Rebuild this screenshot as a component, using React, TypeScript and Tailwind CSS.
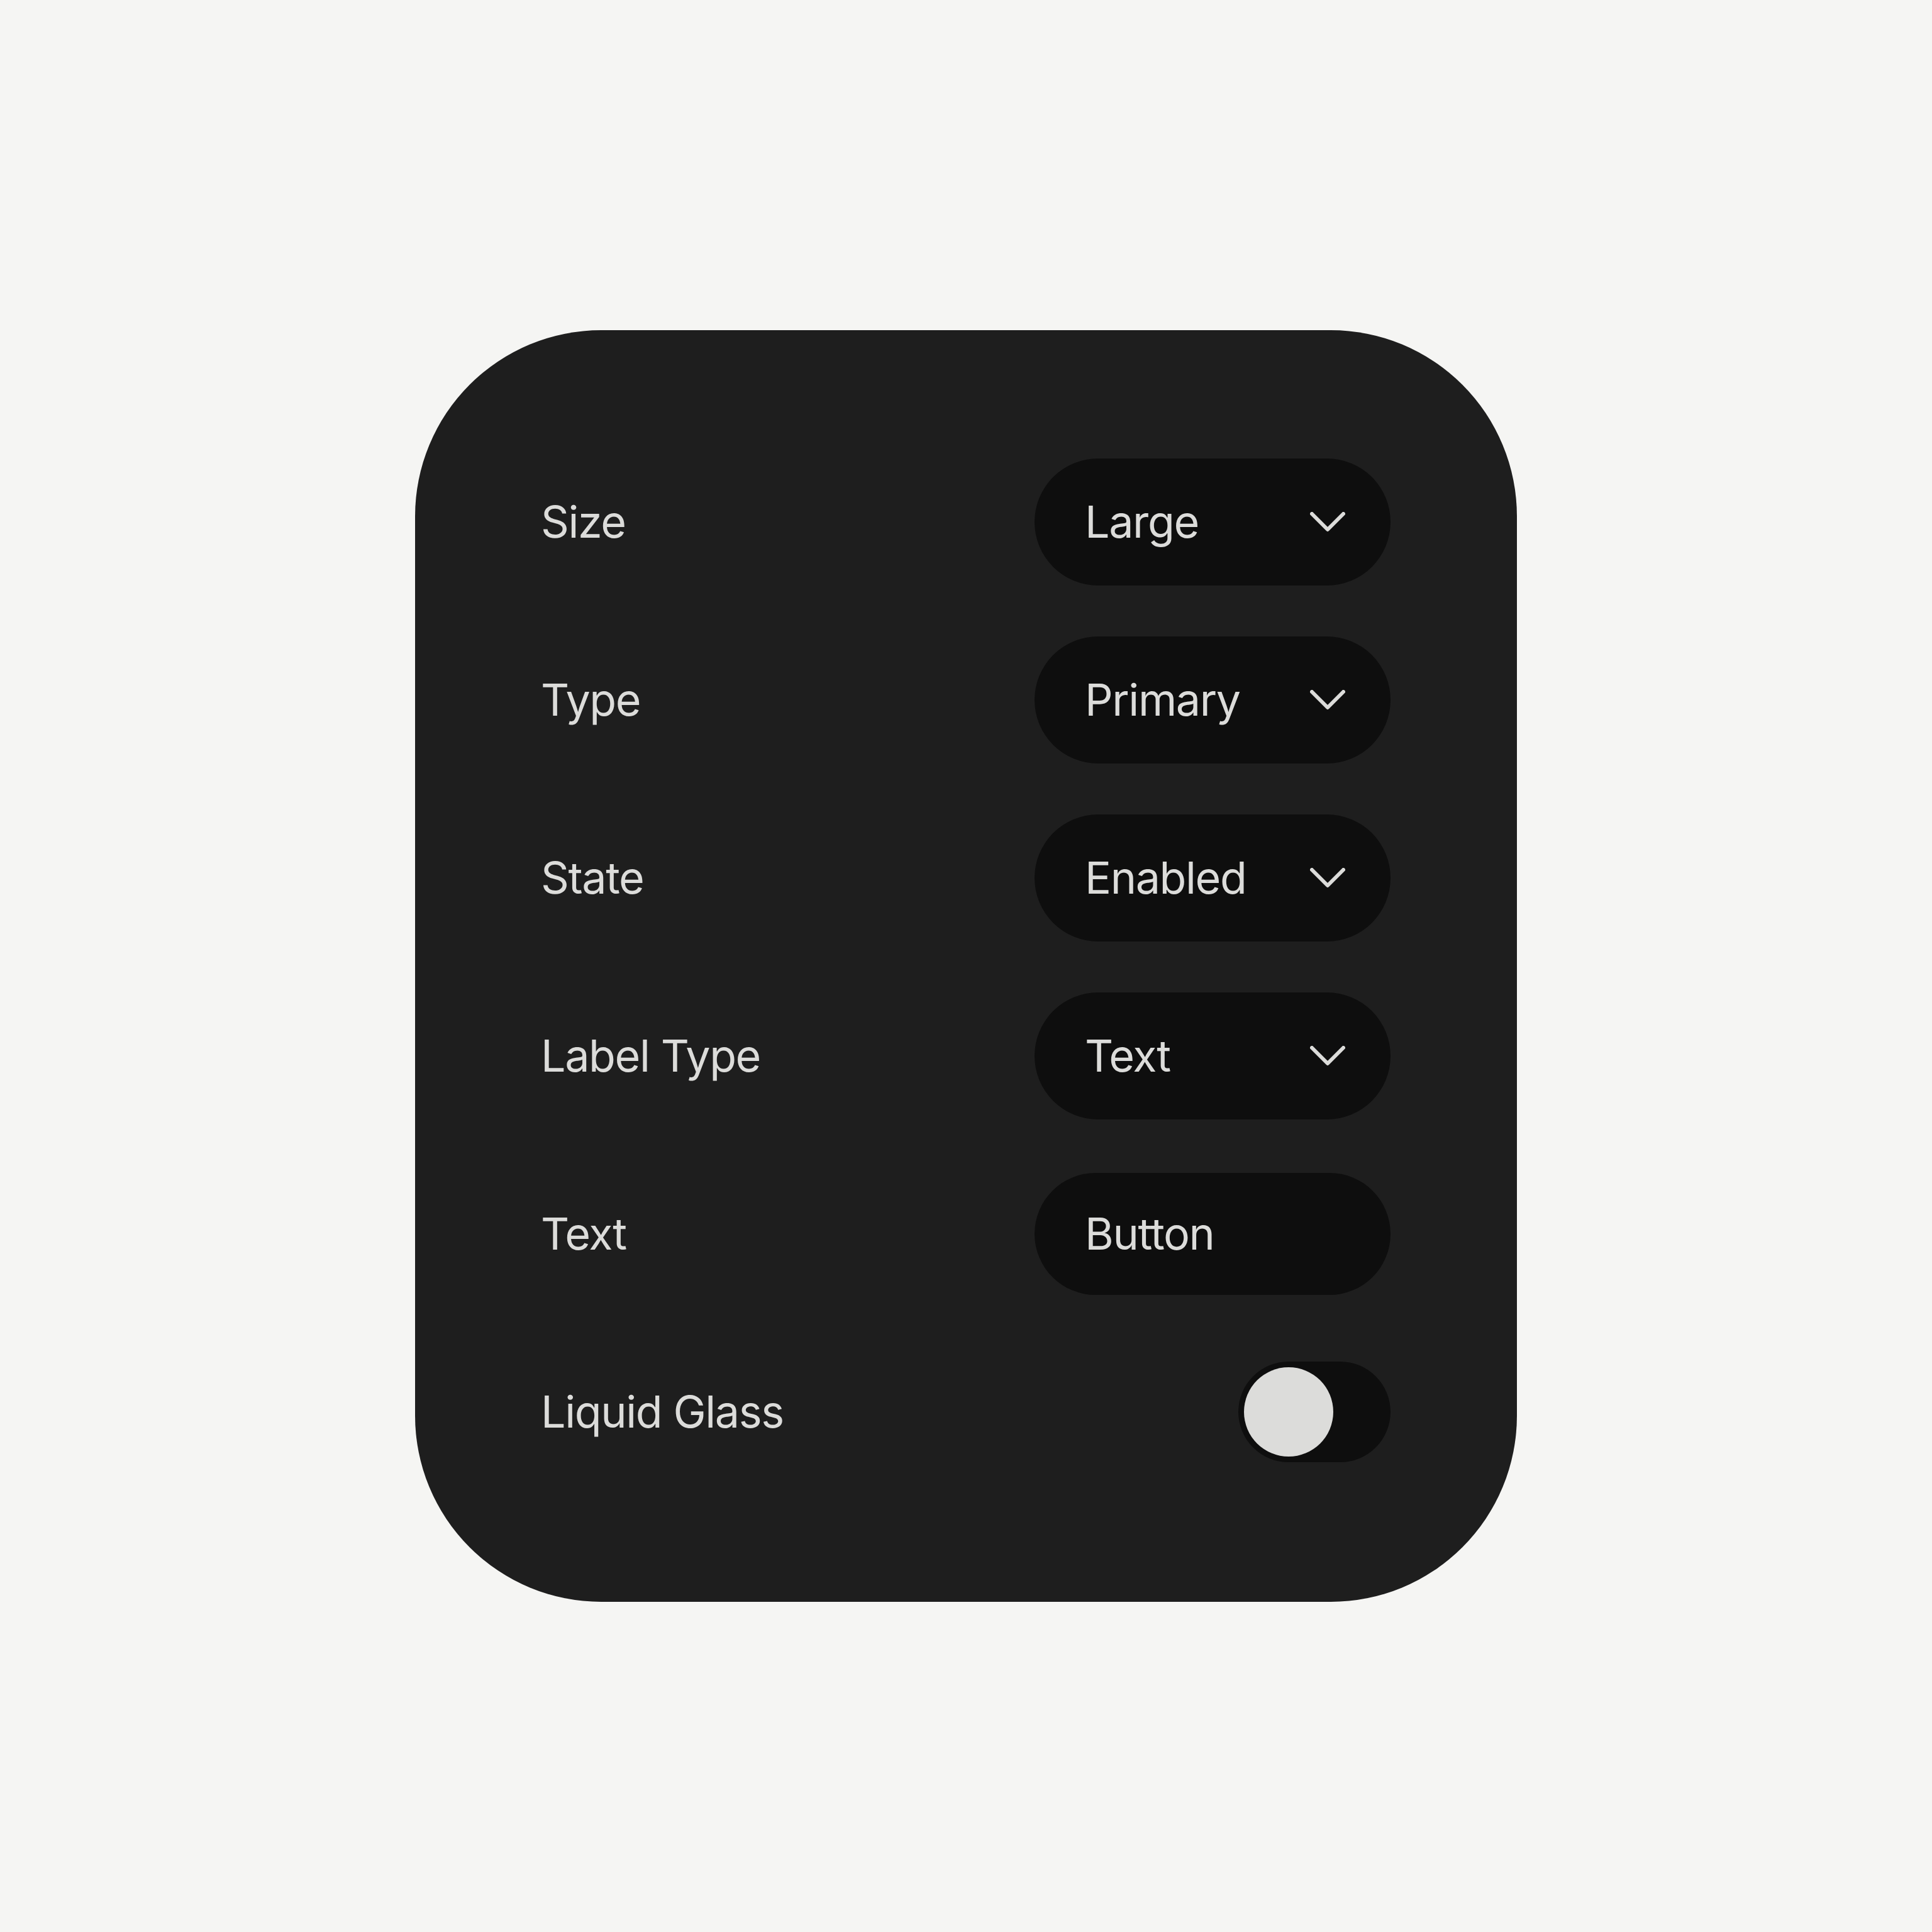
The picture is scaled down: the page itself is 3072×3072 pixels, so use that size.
import { ReactNode } from 'react'

const font = { fontFamily: 'Inter, "Noto Sans", sans-serif' }

function Chevron() {
  return (
    <svg width="56" height="32" viewBox="0 0 56 32" fill="none" aria-hidden>
      <polyline
        points="3,3 28,28 53,3"
        stroke="#dcdcda"
        strokeWidth="6"
        strokeLinecap="round"
        strokeLinejoin="round"
      />
    </svg>
  )
}

function Select({ value }: { value: string }) {
  return (
    <div className="flex h-[202px] w-[566px] items-center justify-between rounded-full bg-[#0e0e0e] pl-[80px] pr-[72px]">
      <span className="text-[70px] leading-none tracking-[-0.02em] text-[#dcdcda]">
        {value}
      </span>
      <Chevron />
    </div>
  )
}

function Field({ value }: { value: string }) {
  return (
    <div className="flex h-[194px] w-[566px] items-center rounded-full bg-[#0e0e0e] pl-[80px]">
      <span className="text-[70px] leading-none tracking-[-0.02em] text-[#dcdcda]">
        {value}
      </span>
    </div>
  )
}

function Toggle() {
  return (
    <div className="flex h-[160px] w-[242px] items-center rounded-full bg-[#0e0e0e] pl-[9px]">
      <div className="h-[142px] w-[142px] rounded-full bg-[#dcdcda]" />
    </div>
  )
}

function Row({ label, children }: { label: string; children: ReactNode }) {
  return (
    <div className="flex h-[202px] items-center justify-between">
      <span className="text-[70px] leading-none tracking-[-0.02em] text-[#dcdcda]">
        {label}
      </span>
      {children}
    </div>
  )
}

export default function App() {
  return (
    <div
      className="flex h-[3072px] w-[3072px] items-center justify-center bg-[#f5f5f3]"
      style={font}
    >
      <div className="flex w-[1752px] flex-col gap-[81px] rounded-[296px] bg-[#1e1e1e] pb-[201px] pl-[200px] pr-[201px] pt-[204px]">
        <Row label="Size">
          <Select value="Large" />
        </Row>
        <Row label="Type">
          <Select value="Primary" />
        </Row>
        <Row label="State">
          <Select value="Enabled" />
        </Row>
        <Row label="Label Type">
          <Select value="Text" />
        </Row>
        <Row label="Text">
          <Field value="Button" />
        </Row>
        <Row label="Liquid Glass">
          <Toggle />
        </Row>
      </div>
    </div>
  )
}
